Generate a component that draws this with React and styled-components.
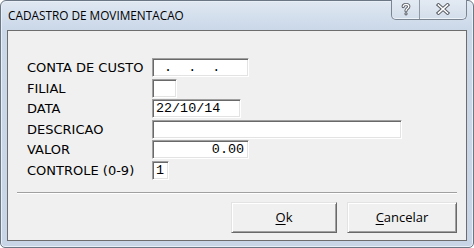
import React from 'react';
import styled, {createGlobalStyle} from 'styled-components';

const GlobalStyle = createGlobalStyle`
  html, body {
    margin: 0;
    padding: 0;
    background: #ffffff;
  }
`;

const rows = [
  {label: 'CONTA DE CUSTO', width: 97, value: ' .  .  .'},
  {label: 'FILIAL', width: 25, value: ''},
  {label: 'DATA', width: 89, value: '22/10/14'},
  {label: 'DESCRICAO', width: 250, value: ''},
  {label: 'VALOR', width: 97, value: '0.00', right: true},
  {label: 'CONTROLE (0-9)', width: 17, value: '1'},
];

const HelpGlyph = () => (
  <svg width="12" height="14" viewBox="0 0 12 14">
    <path d="M3.2 4.6 C3.2 1.8 8.8 1.8 8.8 4.6 C8.8 6.6 6 6.6 6 8.8" fill="none" stroke="#5a5f66" strokeWidth="3.2" strokeLinecap="round" />
    <circle cx="6" cy="11.8" r="1.6" fill="#5a5f66" />
    <path d="M3.2 4.6 C3.2 1.8 8.8 1.8 8.8 4.6 C8.8 6.6 6 6.6 6 8.8" fill="none" stroke="#ffffff" strokeWidth="1.3" strokeLinecap="round" />
    <circle cx="6" cy="11.8" r="0.6" fill="#ffffff" />
  </svg>
);

const CloseGlyph = () => (
  <svg width="14" height="12" viewBox="0 0 14 12">
    <path d="M2.5 2 L11.5 10 M11.5 2 L2.5 10" fill="none" stroke="#5a5f66" strokeWidth="3.6" strokeLinecap="square" />
    <path d="M2.5 2 L11.5 10 M11.5 2 L2.5 10" fill="none" stroke="#ffffff" strokeWidth="1.6" strokeLinecap="square" />
  </svg>
);

const App = () => {
  return (
    <>
      <GlobalStyle />
      <Window>
        <TitleBar>
          <Title>CADASTRO DE MOVIMENTACAO</Title>
          <CaptionButtons>
            <CaptionButton w={28}><HelpGlyph /></CaptionButton>
            <CaptionButton w={47} last><CloseGlyph /></CaptionButton>
          </CaptionButtons>
        </TitleBar>
        <Client>
          <Form>
            {rows.map(r => (
              <React.Fragment key={r.label}>
                <Label>{r.label}</Label>
                <Field w={r.width} right={r.right}>{r.value}</Field>
              </React.Fragment>
            ))}
          </Form>
          <Separator />
          <ButtonRow>
            <Button w={106}><u>O</u>k</Button>
            <Button w={110}><u>C</u>ancelar</Button>
          </ButtonRow>
        </Client>
      </Window>
    </>
  );
};

export default App;

const Window = styled.div`
  width: 474px;
  height: 248px;
  box-sizing: border-box;
  border: 1px solid #6c7786;
  border-radius: 6px 6px 5px 5px;
  background: linear-gradient(#dfe8f2, #cbd8e8 28px, #c8d5e6);
  display: flex;
  flex-direction: column;
  padding: 0 6px 6px 6px;
  box-shadow: inset 0 0 0 1px #e9eff6;
`;

const TitleBar = styled.div`
  height: 29px;
  display: flex;
  align-items: flex-start;
`;

const Title = styled.div`
  font-family: "Open Sans", "Liberation Sans", sans-serif;
  font-size: 11.8px;
  color: #000;
  padding: 6px 0 0 1px;
  line-height: 16px;
  white-space: nowrap;
`;

const CaptionButtons = styled.div`
  margin-left: auto;
  margin-top: -1px;
  display: flex;
  height: 19px;
  border: 1px solid #7b8592;
  border-top: none;
  border-radius: 0 0 5px 5px;
  overflow: hidden;
  background: linear-gradient(#e3eaf3, #d3deeb);
  box-shadow: inset 0 -1px 0 #eef3f9;
`;

const CaptionButton = styled.div`
  width: ${props => props.w - 1}px;
  display: flex;
  align-items: center;
  justify-content: center;
  border-right: ${props => props.last ? 'none' : '1px solid #8f99a6'};
  padding-bottom: 1px;
`;

const Client = styled.div`
  flex: 1;
  background: #f0f0f0;
  border: 1px solid #6d6d6d;
  display: flex;
  flex-direction: column;
  padding: 27px 9px 0 9px;
`;

const Form = styled.div`
  display: grid;
  grid-template-columns: 125px auto;
  grid-auto-rows: 19px;
  row-gap: 1.5px;
  margin-left: 10px;
  align-items: center;
  justify-items: start;
`;

const Label = styled.div`
  font-family: "DejaVu Sans", Tahoma, sans-serif;
  font-size: 13px;
  color: #000;
  white-space: nowrap;
  line-height: 19px;
`;

const Field = styled.div`
  width: ${props => props.w}px;
  height: 19px;
  box-sizing: border-box;
  background: #fff;
  border: 1px solid;
  border-color: #a0a0a0 #ffffff #ffffff #a0a0a0;
  box-shadow: inset 1px 1px 0 #696969, inset -1px -1px 0 #e3e3e3;
  font-family: "Liberation Mono", "Courier New", monospace;
  font-size: 13.4px;
  line-height: 17px;
  color: #000;
  white-space: pre;
  padding: 0 4px 0 3px;
  text-align: ${props => props.right ? 'right' : 'left'};
  overflow: hidden;
`;

const Separator = styled.div`
  margin-top: 12px;
  height: 0;
  border-top: 1px solid #a0a0a0;
  border-bottom: 1px solid #ffffff;
`;

const ButtonRow = styled.div`
  display: flex;
  justify-content: flex-end;
  gap: 10px;
  margin-top: 8px;
`;

const Button = styled.div`
  width: ${props => props.w}px;
  height: 31px;
  box-sizing: border-box;
  background: #f0f0f0;
  border: 1px solid;
  border-color: #e3e3e3 #696969 #696969 #e3e3e3;
  box-shadow: inset 1px 1px 0 #ffffff, inset -1px -1px 0 #a0a0a0;
  display: flex;
  align-items: center;
  justify-content: center;
  font-family: "Open Sans", "Liberation Sans", sans-serif;
  font-size: 13px;
  color: #000;

  u {
    text-decoration-thickness: 1px;
    text-underline-offset: 2px;
  }
`;
